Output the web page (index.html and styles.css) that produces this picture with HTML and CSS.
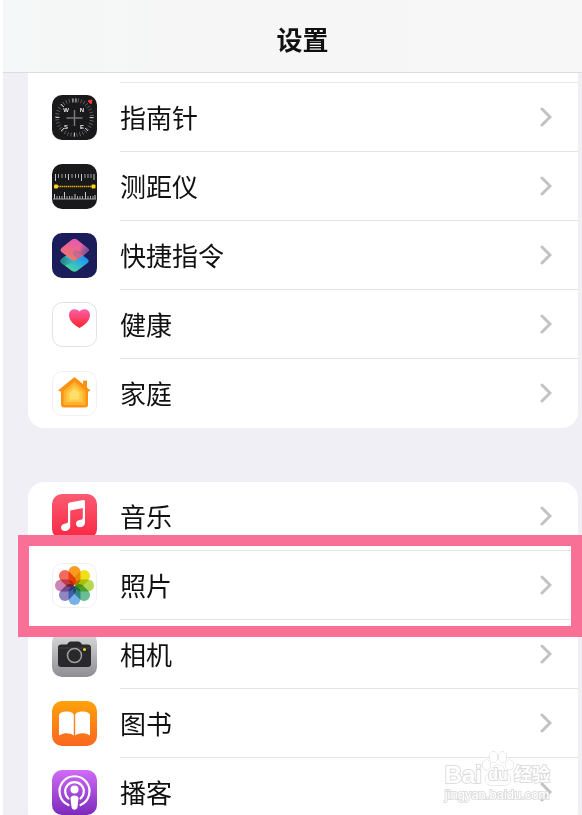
FILE: index.html
```html
<!DOCTYPE html>
<html lang="zh-CN">
<head>
    <meta charset="UTF-8">
    <meta name="viewport" content="width=device-width, initial-scale=1.0">
    <title>设置</title>
    <link rel="stylesheet" href="styles.css">
</head>
<body>
    <div class="settings">
        <!-- Header -->
        <header class="settings-header">
            <h1 class="settings-title">设置</h1>
        </header>

        <!-- Lists -->
        <main class="settings-content">
            <nav class="card card-first">
                <a class="row" href="#compass">
                    <svg class="row-icon" viewBox="0 0 45 45">
                        <rect width="45" height="45" rx="10" fill="#19191b"/>
                        <circle cx="22.5" cy="22.5" r="17.5" fill="none" stroke="#66666a" stroke-width="4" stroke-dasharray="0.8 2.25"/>
                        <path d="M21 3.5v4M24 3.5v4M22.5 37.5v4M3.5 22.5h4M37.5 22.5h4M9 36l3-3M36 36l-3-3M9 9l3 3" stroke="#c4c4c6" stroke-width="1"/>
                        <path d="M22.5 15v16M14.5 23h16" stroke="#77777a" stroke-width="1.5"/>
                        <path d="M36 6l4-1-1 4z" fill="#ff3b30" stroke="#ff3b30"/>
                        <g class="compass-letters">
                            <text x="14" y="17">W</text>
                            <text x="30" y="17">N</text>
                            <text x="14" y="34">S</text>
                            <text x="30" y="34">E</text>
                        </g>
                    </svg>
                    <span class="row-body">
                        <span class="row-label">指南针</span>
                        <svg class="chevron" viewBox="0 0 12 20"><path d="M2 2l8 8-8 8"/></svg>
                    </span>
                </a>
                <a class="row" href="#measure">
                    <svg class="row-icon" viewBox="0 0 45 45">
                        <rect width="45" height="45" rx="10" fill="#19191b"/>
                        <path d="M3.5 10v7M16.5 10v6M29.5 10v7M42 10v6M2.5 35v-5M12.5 35v-7M23 35v-5M33.5 35v-7M43 35v-4" stroke="#c9c9cb" stroke-width="1"/>
                        <path d="M6.5 10v4M10 10v4M13.5 10v4M20 10v4M23.5 10v4M26.5 10v4M33 10v4M36 10v4M39 10v4M5 35v-3M7.5 35v-3M10 35v-3M15 35v-3M17.5 35v-3M20 35v-3M25.5 35v-3M28 35v-3M30.5 35v-3M36 35v-3M38.5 35v-3M41 35v-3M1 35h43" stroke="#a4a4a6" stroke-width="1"/>
                        <path d="M4 22.5h37" stroke="#d8a900" stroke-width="1.5" stroke-dasharray="1.5 .5"/>
                        <rect x="2" y="20.5" width="4" height="4" rx="1" fill="#ffd21a"/>
                        <rect x="39.5" y="20.5" width="4" height="4" rx="1" fill="#ffd21a"/>
                    </svg>
                    <span class="row-body">
                        <span class="row-label">测距仪</span>
                        <svg class="chevron" viewBox="0 0 12 20"><path d="M2 2l8 8-8 8"/></svg>
                    </span>
                </a>
                <a class="row" href="#shortcuts">
                    <svg class="row-icon" viewBox="0 0 45 45">
                        <defs>
                            <linearGradient id="shortcutTop" x1="0.6" y1="0" x2="0.3" y2="1">
                                <stop offset="0" stop-color="#e457b7"/>
                                <stop offset="1" stop-color="#f47a5c"/>
                            </linearGradient>
                            <linearGradient id="shortcutShade" x1="0.55" y1="0.3" x2="1" y2="0.5">
                                <stop offset="0" stop-color="#74509c" stop-opacity="0"/>
                                <stop offset="1" stop-color="#74509c"/>
                            </linearGradient>
                            <linearGradient id="shortcutBottom" x1="0.9" y1="0.2" x2="0.3" y2="0.9">
                                <stop offset="0" stop-color="#1a86fa"/>
                                <stop offset="0.5" stop-color="#2cb2dc"/>
                                <stop offset="1" stop-color="#4bd799"/>
                            </linearGradient>
                            <linearGradient id="shortcutFold" x1="0" y1="0.5" x2="1" y2="0.5">
                                <stop offset="0" stop-color="#217f74"/>
                                <stop offset="1" stop-color="#217f9c" stop-opacity="0"/>
                            </linearGradient>
                        </defs>
                        <rect width="45" height="45" rx="10" fill="#1b1c5a"/>
                        <path d="M20 18Q22.500 16.500 25 18L35.500 26Q38 28 35.500 30L25 38Q22.500 39.500 20 38L9.500 30Q7.500 28 9.500 26z" fill="url(#shortcutBottom)"/>
                        <path d="M9.500 30Q7.500 28 9.500 26L13 23.500 22 29 13 32.500z" fill="url(#shortcutFold)"/>
                        <path d="M20 6.500Q22.500 5 25 6.500L35.500 15Q38 17 35.500 19L31.500 22.500 26 18.500Q22.500 16.500 21 19.500Q20.500 21.500 26 26Q22.500 29 20 27L9.500 19Q7.500 17 9.500 15z" fill="url(#shortcutTop)"/>
                        <path d="M20 6.500Q22.500 5 25 6.500L35.500 15Q38 17 35.500 19L31.500 22.500 26 18.500Q23.500 17 22 18z" fill="url(#shortcutShade)"/>
                        <path d="M21 19.500Q22.500 16.500 26 18.500L31.500 22.500 26 26Q21 22 21 19.500z" fill="#c8688c"/>
                    </svg>
                    <span class="row-body">
                        <span class="row-label">快捷指令</span>
                        <svg class="chevron" viewBox="0 0 12 20"><path d="M2 2l8 8-8 8"/></svg>
                    </span>
                </a>
                <a class="row" href="#health">
                    <svg class="row-icon" viewBox="0 0 45 45">
                        <defs>
                            <linearGradient id="heart" x1="0" y1="0" x2="0" y2="1">
                                <stop offset="0" stop-color="#fb5fae"/>
                                <stop offset="1" stop-color="#fb2424"/>
                            </linearGradient>
                        </defs>
                        <rect x=".5" y=".5" width="44" height="44" rx="10" fill="#fff" stroke="#e2e2e4"/>
                        <path d="M27.500 26C22 23 17 18.500 17 13C17 6.500 24.500 5.500 27.500 9.500C30.500 5.500 38 6.500 38 13C38 18.500 33 23 27.500 26z" fill="url(#heart)"/>
                    </svg>
                    <span class="row-body">
                        <span class="row-label">健康</span>
                        <svg class="chevron" viewBox="0 0 12 20"><path d="M2 2l8 8-8 8"/></svg>
                    </span>
                </a>
                <a class="row" href="#home">
                    <svg class="row-icon" viewBox="0 0 45 45">
                        <rect x=".5" y=".5" width="44" height="44" rx="10" fill="#fff" stroke="#f0f0f0"/>
                        <path d="M22.500 6L31 13V10.500Q31 9.500 32 9.500H34Q35 9.500 35 10.500V16.500L38.500 19.500Q38 20.500 36 20.500V33.500Q36 36.500 33 36.500H12Q9 36.500 9 33.500V20.500Q7 20.500 6 19.500z" fill="#fb9212"/>
                        <path d="M22.500 12l10 8.500v12.500h-20v-12.500z" fill="#fdb22f" stroke="#fdb22f" stroke-width="2" stroke-linejoin="round"/>
                        <path d="M22.500 15.500l7 6v8.500h-14v-8.500z" fill="#fec945" stroke="#fec945" stroke-width="2" stroke-linejoin="round"/>
                        <path d="M22.500 19l4 3.500v5h-8v-5z" fill="#ffdf69" stroke="#ffdf69" stroke-width="2" stroke-linejoin="round"/>
                    </svg>
                    <span class="row-body">
                        <span class="row-label">家庭</span>
                        <svg class="chevron" viewBox="0 0 12 20"><path d="M2 2l8 8-8 8"/></svg>
                    </span>
                </a>
            </nav>

            <nav class="card">
                <a class="row" href="#music">
                    <svg class="row-icon" viewBox="0 0 45 45">
                        <defs>
                            <linearGradient id="music" x1="0" y1="0" x2="0" y2="1">
                                <stop offset="0" stop-color="#fa5b72"/>
                                <stop offset="1" stop-color="#fa2742"/>
                            </linearGradient>
                        </defs>
                        <rect width="45" height="45" rx="10" fill="url(#music)"/>
                        <path d="M16 10.500Q16 9 17.500 8.600L31.500 6Q33 5.800 33 7.500V28.500C33 31.500 30.500 33.200 28 33.200C25.500 33.200 24 31.700 24 29.800C24 27 26.500 26.200 28.800 25.800C30.300 25.500 30.800 25 30.800 23.500V14L18.200 16.600V32C18.200 35.500 15.500 37 13 37C10.500 37 9 35.500 9 33.500C9 31 11 30 13.500 29.500C15.500 29.100 16 28.500 16 27z" fill="#fff"/>
                    </svg>
                    <span class="row-body">
                        <span class="row-label">音乐</span>
                        <svg class="chevron" viewBox="0 0 12 20"><path d="M2 2l8 8-8 8"/></svg>
                    </span>
                </a>
                <a class="row row-highlighted" href="#photos">
                    <svg class="row-icon" viewBox="0 0 45 45">
                        <rect x=".5" y=".5" width="44" height="44" rx="10" fill="#fff" stroke="#f0f0f0"/>
                        <g class="petals">
                            <rect x="16.5" y="3" width="12" height="19" rx="6" fill="#f99b20"/>
                            <rect x="16.5" y="3" width="12" height="19" rx="6" fill="#f0e018" transform="rotate(45 22.5 22.5)"/>
                            <rect x="16.5" y="3" width="12" height="19" rx="6" fill="#b6d750" transform="rotate(90 22.5 22.5)"/>
                            <rect x="16.5" y="3" width="12" height="19" rx="6" fill="#69be91" transform="rotate(135 22.5 22.5)"/>
                            <rect x="16.5" y="3" width="12" height="19" rx="6" fill="#76b2e5" transform="rotate(180 22.5 22.5)"/>
                            <rect x="16.5" y="3" width="12" height="19" rx="6" fill="#8e87c2" transform="rotate(225 22.5 22.5)"/>
                            <rect x="16.5" y="3" width="12" height="19" rx="6" fill="#cd85b8" transform="rotate(270 22.5 22.5)"/>
                            <rect x="16.5" y="3" width="12" height="19" rx="6" fill="#f26b5c" transform="rotate(315 22.5 22.5)"/>
                        </g>
                    </svg>
                    <span class="row-body">
                        <span class="row-label">照片</span>
                        <svg class="chevron" viewBox="0 0 12 20"><path d="M2 2l8 8-8 8"/></svg>
                    </span>
                </a>
                <a class="row" href="#camera">
                    <svg class="row-icon" viewBox="0 0 45 45">
                        <defs>
                            <linearGradient id="camera" x1="0" y1="0" x2="0" y2="1">
                                <stop offset="0" stop-color="#dcdcde"/>
                                <stop offset="1" stop-color="#8e8d93"/>
                            </linearGradient>
                        </defs>
                        <rect width="45" height="45" rx="10" fill="url(#camera)"/>
                        <path d="M9.500 12.500H15Q16.500 9.500 18.500 9.500H26.500Q28.500 9.500 30 12.500H35.500Q39 12.500 39 15.500V32Q39 35 35.500 35H9.500Q6 35 6 32V15.500Q6 12.500 9.500 12.500z" fill="#29292b"/>
                        <path d="M6.500 16h32" stroke="#424245" stroke-width="1"/>
                        <circle cx="22.5" cy="23.5" r="7" fill="#29292b" stroke="#a1a1a5" stroke-width="1.5"/>
                        <circle cx="32.5" cy="17.5" r="1.5" fill="#f8cf18"/>
                    </svg>
                    <span class="row-body">
                        <span class="row-label">相机</span>
                        <svg class="chevron" viewBox="0 0 12 20"><path d="M2 2l8 8-8 8"/></svg>
                    </span>
                </a>
                <a class="row" href="#books">
                    <svg class="row-icon" viewBox="0 0 45 45">
                        <defs>
                            <linearGradient id="books" x1="0" y1="0" x2="0" y2="1">
                                <stop offset="0" stop-color="#fda20b"/>
                                <stop offset="1" stop-color="#fa661f"/>
                            </linearGradient>
                        </defs>
                        <rect width="45" height="45" rx="10" fill="url(#books)"/>
                        <path d="M21.800 34.500C18 31.500 12 31.500 8 34Q7 34.500 7 33.500V14.500C7 9.500 21.800 9 21.800 14.500zM23.200 34.500C27 31.500 33 31.500 37 34Q38 34.500 38 33.500V14.500C38 9.500 23.200 9 23.200 14.500z" fill="#fff"/>
                    </svg>
                    <span class="row-body">
                        <span class="row-label">图书</span>
                        <svg class="chevron" viewBox="0 0 12 20"><path d="M2 2l8 8-8 8"/></svg>
                    </span>
                </a>
                <a class="row" href="#podcasts">
                    <svg class="row-icon" viewBox="0 0 45 45">
                        <defs>
                            <linearGradient id="podcasts" x1="0" y1="0" x2="0" y2="1">
                                <stop offset="0" stop-color="#d06bf5"/>
                                <stop offset="1" stop-color="#7c2abb"/>
                            </linearGradient>
                        </defs>
                        <rect width="45" height="45" rx="10" fill="url(#podcasts)"/>
                        <path d="M16.500 35A15 15 0 1 1 28.500 35M16.500 28.500A9.300 9.300 0 1 1 28.500 28.500" fill="none" stroke="#fff" stroke-width="2.2" stroke-linecap="round"/>
                        <circle cx="22.5" cy="19.5" r="4" fill="#fff"/>
                        <path d="M18.500 28.500C18.500 24.500 26.500 24.500 26.500 28.500L25.500 37C25 40.500 20 40.500 19.500 37z" fill="#fff"/>
                    </svg>
                    <span class="row-body">
                        <span class="row-label">播客</span>
                        <svg class="chevron" viewBox="0 0 12 20"><path d="M2 2l8 8-8 8"/></svg>
                    </span>
                </a>
            </nav>
        </main>

        <!-- Watermark -->
        <div class="watermark">
            <div class="watermark-logo">
                <span>Bai</span>
                <span class="watermark-paw">
                    <svg viewBox="0 0 32 36">
                        <path d="M16 14C22 14 22 20 26 23C31 28 28 34 23 34H9C4 34 1 28 6 23C10 20 10 14 16 14z"/>
                        <ellipse cx="11.5" cy="6" rx="4" ry="5.5"/>
                        <ellipse cx="20.5" cy="6" rx="4" ry="5.5"/>
                        <ellipse cx="4.5" cy="14" rx="4" ry="5"/>
                        <ellipse cx="27.5" cy="14" rx="4" ry="5"/>
                    </svg>
                    <span class="watermark-du">du</span>
                </span>
                <span class="watermark-cn">经验</span>
            </div>
            <div class="watermark-url">jingyan.baidu.com</div>
        </div>
    </div>
</body>
</html>
```
FILE: styles.css
```css
/* Settings page */
* {
    box-sizing: border-box;
}

body {
    margin: 0;
    background: #fff;
    font-family: "Noto Sans CJK SC", sans-serif;
    color: #111;
}

.settings {
    position: relative;
    height: 100vh;
    overflow: hidden;
    padding-left: 3px;
}

/* Header */
.settings-header {
    height: 73px;
    padding: 6px 0 0 20px;
    display: flex;
    align-items: center;
    justify-content: center;
    background: linear-gradient(90deg, #f5f8f8, #f6f6f6 30%, #f7f7f7);
    border-bottom: 1px solid #dcdce0;
}

.settings-title {
    margin: 0;
    font-size: 26px;
    font-weight: 700;
    line-height: 36px;
}

/* Grouped lists */
.settings-content {
    display: flex;
    flex-direction: column;
    gap: 54px;
    padding: 0 4px 0 25px;
    background: #f0eff5;
}

.card {
    background: #fff;
    border-radius: 16px;
}

/* The first list is scrolled under the header */
.card-first {
    padding-top: 10px;
    border-radius: 0 0 16px 16px;
    background: linear-gradient(#e9e9eb, #e9e9eb) 92px 9px / 100% 1px no-repeat #fff;
}

.row {
    position: relative;
    display: flex;
    align-items: center;
    gap: 23px;
    height: 69px;
    padding-left: 24px;
    color: inherit;
    text-decoration: none;
}

.row-icon {
    flex: none;
    width: 45px;
    height: 45px;
}

.row-body {
    flex: 1;
    height: 100%;
    display: flex;
    align-items: center;
    justify-content: space-between;
    padding-right: 26px;
    border-bottom: 1px solid #e4e4e7;
}

.row:last-child .row-body {
    border-bottom-color: transparent;
}

.row-label {
    font-size: 26px;
    line-height: 36px;
}

.chevron {
    width: 12px;
    height: 20px;
    fill: none;
    stroke: #c2c2c4;
    stroke-width: 3;
    stroke-linecap: round;
}

/* Frame around the photos row */
.row-highlighted::after {
    content: "";
    position: absolute;
    z-index: 1;
    inset: -16px -4px -17px -10px;
    border: 11px solid #f87096;
}

/* Icon details */
.compass-letters {
    fill: #e8e8e8;
    font: 700 6px "Liberation Sans", sans-serif;
    text-anchor: middle;
}

.petals {
    isolation: isolate;
}

.petals rect {
    mix-blend-mode: multiply;
}

/* Watermark */
.watermark {
    position: absolute;
    right: 32px;
    bottom: 12px;
    color: #fff;
    font-family: "Liberation Sans", "Noto Sans CJK SC", sans-serif;
    -webkit-text-stroke: 2px #dededf;
    paint-order: stroke fill;
}

.watermark-logo {
    display: flex;
    align-items: flex-end;
    font-size: 24px;
    font-weight: 700;
    line-height: 24px;
}

.watermark-paw {
    position: relative;
    display: flex;
}

.watermark-paw svg {
    width: 32px;
    height: 36px;
    fill: #fff;
    stroke: #d6d6d8;
    stroke-width: 1;
}

.watermark-du {
    position: absolute;
    inset: auto 0 0;
    font-size: 16px;
    text-align: center;
}

.watermark-cn {
    font-size: 18px;
}

.watermark-url {
    font-size: 13px;
    line-height: 16px;
}
```
